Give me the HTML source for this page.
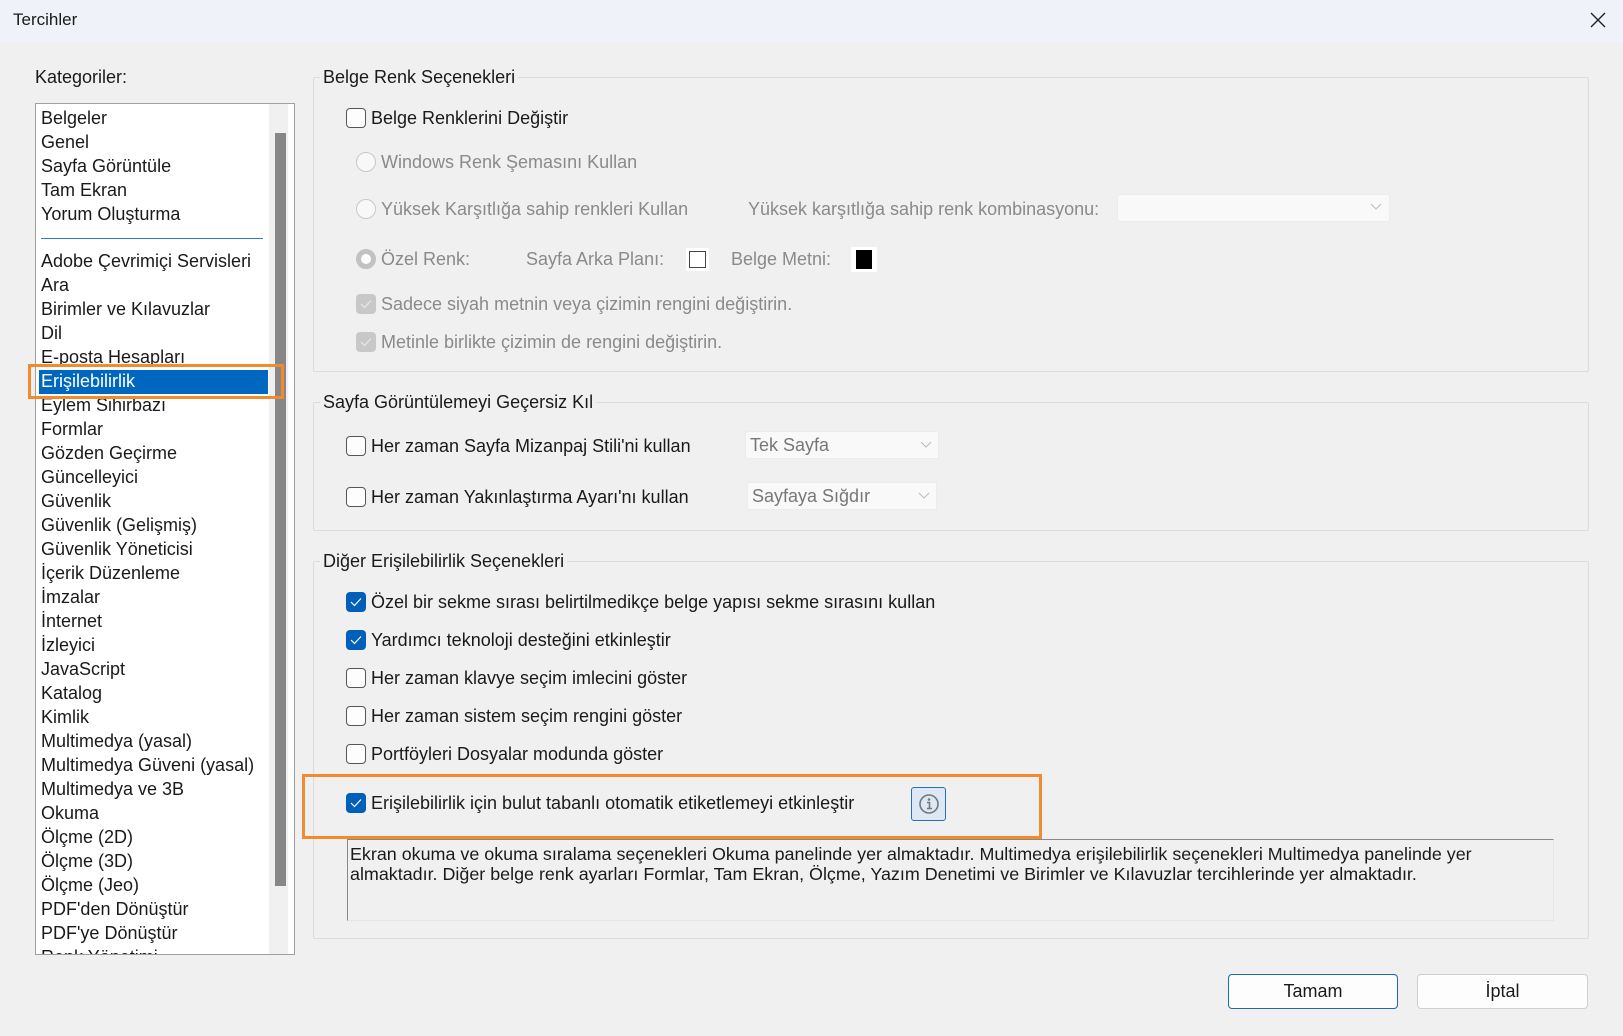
<!DOCTYPE html>
<html><head><meta charset="utf-8"><style>
*{box-sizing:border-box;margin:0;padding:0}
body{width:1623px;height:1036px;background:#f0f0f0;font-family:"Liberation Sans",Arial,sans-serif;font-size:18px;color:#1a1a1a;position:relative;overflow:hidden}
.a{position:absolute;white-space:nowrap;line-height:20px}
.title{position:absolute;left:0;top:0;width:1623px;height:42px;background:#eff3f9}
.list{position:absolute;left:35px;top:103px;width:260px;height:852px;background:#fff;border:1px solid #a0a0a0;overflow:hidden}
.li{position:absolute;left:5px;line-height:20px;white-space:nowrap}
.grp{position:absolute;border:1px solid #dcdcdc;border-radius:2px}
.gt{position:absolute;background:#f0f0f0;line-height:20px}
.cb{position:absolute;width:20px;height:20px;border:1px solid #555;border-radius:4px;background:#fdfdfd}
.cbc{position:absolute;width:20px;height:20px;border-radius:4px;background:#005fb8}
.cbd{position:absolute;width:20px;height:20px;border-radius:4px;background:#c8c8c8}
.rad{position:absolute;width:20px;height:20px;border:1px solid #c8c8c8;border-radius:50%;background:#f8f8f8}
.dis{color:#8a8a8a}
.dd{position:absolute;background:#f9f9f9;border:1px solid #ececec}
.btn{position:absolute;height:35px;border:1px solid #cfcfcf;border-radius:4px;background:#fdfdfd;text-align:center;line-height:33px}
</style></head><body>
<div class="title"></div>
<div class="a" style="left:13px;top:10px;font-size:17px">Tercihler</div>
<svg class="a" style="left:1590px;top:12px" width="16" height="16"><path d="M1 1L15 15M15 1L1 15" stroke="#222" stroke-width="1.4"/></svg>

<div class="a" style="left:35px;top:67px">Kategoriler:</div>
<div class="list">
<div style="position:absolute;left:233px;top:0;width:19px;height:852px;background:#f0f0f0"></div>
<div style="position:absolute;left:239px;top:29px;width:11px;height:753px;background:#878787"></div>
<div style="position:absolute;left:5px;top:134px;width:222px;height:1px;background:#2b7bd0"></div>
<div style="position:absolute;left:3px;top:266px;width:229px;height:24px;background:#0067c0"></div>
<div class="li" style="top:4px">Belgeler</div>
<div class="li" style="top:28px">Genel</div>
<div class="li" style="top:52px">Sayfa Görüntüle</div>
<div class="li" style="top:76px">Tam Ekran</div>
<div class="li" style="top:100px">Yorum Oluşturma</div>
<div class="li" style="top:147px">Adobe Çevrimiçi Servisleri</div>
<div class="li" style="top:171px">Ara</div>
<div class="li" style="top:195px">Birimler ve Kılavuzlar</div>
<div class="li" style="top:219px">Dil</div>
<div class="li" style="top:243px">E-posta Hesapları</div>
<div class="li" style="top:267px;color:#fff">Erişilebilirlik</div>
<div class="li" style="top:291px">Eylem Sihirbazı</div>
<div class="li" style="top:315px">Formlar</div>
<div class="li" style="top:339px">Gözden Geçirme</div>
<div class="li" style="top:363px">Güncelleyici</div>
<div class="li" style="top:387px">Güvenlik</div>
<div class="li" style="top:411px">Güvenlik (Gelişmiş)</div>
<div class="li" style="top:435px">Güvenlik Yöneticisi</div>
<div class="li" style="top:459px">İçerik Düzenleme</div>
<div class="li" style="top:483px">İmzalar</div>
<div class="li" style="top:507px">İnternet</div>
<div class="li" style="top:531px">İzleyici</div>
<div class="li" style="top:555px">JavaScript</div>
<div class="li" style="top:579px">Katalog</div>
<div class="li" style="top:603px">Kimlik</div>
<div class="li" style="top:627px">Multimedya (yasal)</div>
<div class="li" style="top:651px">Multimedya Güveni (yasal)</div>
<div class="li" style="top:675px">Multimedya ve 3B</div>
<div class="li" style="top:699px">Okuma</div>
<div class="li" style="top:723px">Ölçme (2D)</div>
<div class="li" style="top:747px">Ölçme (3D)</div>
<div class="li" style="top:771px">Ölçme (Jeo)</div>
<div class="li" style="top:795px">PDF'den Dönüştür</div>
<div class="li" style="top:819px">PDF'ye Dönüştür</div>
<div class="li" style="top:843px">Renk Yönetimi</div>
</div>
<div style="position:absolute;left:28px;top:364px;width:256px;height:35px;border:3px solid #f28a30"></div>

<!-- group 1 -->
<div class="grp" style="left:313px;top:77px;width:1276px;height:295px"></div>
<div class="gt" style="left:320px;top:67px;padding:0 3px">Belge Renk Seçenekleri</div>
<div class="cb" style="left:346px;top:108px"></div>
<div class="a" style="left:371px;top:108px">Belge Renklerini Değiştir</div>
<div class="rad" style="left:356px;top:152px"></div>
<div class="a dis" style="left:381px;top:152px">Windows Renk Şemasını Kullan</div>
<div class="rad" style="left:356px;top:199px"></div>
<div class="a dis" style="left:381px;top:199px">Yüksek Karşıtlığa sahip renkleri Kullan</div>
<div class="a dis" style="left:748px;top:199px">Yüksek karşıtlığa sahip renk kombinasyonu:</div>
<div class="dd" style="left:1117px;top:194px;width:273px;height:28px"></div>
<svg class="a" style="left:1370px;top:203px" width="12" height="8"><path d="M1 1L6 6L11 1" fill="none" stroke="#bbb"/></svg>
<div class="rad" style="left:356px;top:249px;background:#fff;border:5px solid #c2c2c2"></div>
<div class="a dis" style="left:381px;top:249px">Özel Renk:</div>
<div class="a dis" style="left:526px;top:249px">Sayfa Arka Planı:</div>
<div style="position:absolute;left:686px;top:248px;width:23px;height:23px;background:#fff;border:3px solid #fff"><div style="width:100%;height:100%;border:1.5px solid #444"></div></div>
<div class="a dis" style="left:731px;top:249px">Belge Metni:</div>
<div style="position:absolute;left:851px;top:247px;width:26px;height:25px;background:#fff;padding:3px 5px"><div style="width:100%;height:100%;background:#000"></div></div>
<div class="cbd" style="left:356px;top:294px"></div>
<svg class="a" style="left:360px;top:299px" width="12" height="10"><path d="M1 5L4.5 8.5L11 1.5" fill="none" stroke="#e8e8e8" stroke-width="1.2"/></svg>
<div class="a dis" style="left:381px;top:294px">Sadece siyah metnin veya çizimin rengini değiştirin.</div>
<div class="cbd" style="left:356px;top:332px"></div>
<svg class="a" style="left:360px;top:337px" width="12" height="10"><path d="M1 5L4.5 8.5L11 1.5" fill="none" stroke="#e8e8e8" stroke-width="1.2"/></svg>
<div class="a dis" style="left:381px;top:332px">Metinle birlikte çizimin de rengini değiştirin.</div>

<!-- group 2 -->
<div class="grp" style="left:313px;top:402px;width:1276px;height:129px"></div>
<div class="gt" style="left:320px;top:392px;padding:0 3px">Sayfa Görüntülemeyi Geçersiz Kıl</div>
<div class="cb" style="left:346px;top:436px"></div>
<div class="a" style="left:371px;top:436px">Her zaman Sayfa Mizanpaj Stili'ni kullan</div>
<div class="dd" style="left:745px;top:431px;width:194px;height:28px"></div>
<div class="a" style="left:750px;top:435px;color:#777">Tek Sayfa</div>
<svg class="a" style="left:920px;top:441px" width="12" height="8"><path d="M1 1L6 6L11 1" fill="none" stroke="#bbb"/></svg>
<div class="cb" style="left:346px;top:487px"></div>
<div class="a" style="left:371px;top:487px">Her zaman Yakınlaştırma Ayarı'nı kullan</div>
<div class="dd" style="left:747px;top:482px;width:190px;height:28px"></div>
<div class="a" style="left:752px;top:486px;color:#777">Sayfaya Sığdır</div>
<svg class="a" style="left:918px;top:492px" width="12" height="8"><path d="M1 1L6 6L11 1" fill="none" stroke="#bbb"/></svg>

<!-- group 3 -->
<div class="grp" style="left:313px;top:561px;width:1276px;height:378px"></div>
<div class="gt" style="left:320px;top:551px;padding:0 3px">Diğer Erişilebilirlik Seçenekleri</div>
<div class="cbc" style="left:346px;top:592px"></div>
<svg class="a" style="left:350px;top:597px" width="12" height="10"><path d="M1 5L4.5 8.5L11 1.5" fill="none" stroke="#fff" stroke-width="1.2"/></svg>
<div class="a" style="left:371px;top:592px">Özel bir sekme sırası belirtilmedikçe belge yapısı sekme sırasını kullan</div>
<div class="cbc" style="left:346px;top:630px"></div>
<svg class="a" style="left:350px;top:635px" width="12" height="10"><path d="M1 5L4.5 8.5L11 1.5" fill="none" stroke="#fff" stroke-width="1.2"/></svg>
<div class="a" style="left:371px;top:630px">Yardımcı teknoloji desteğini etkinleştir</div>
<div class="cb" style="left:346px;top:668px"></div>
<div class="a" style="left:371px;top:668px">Her zaman klavye seçim imlecini göster</div>
<div class="cb" style="left:346px;top:706px"></div>
<div class="a" style="left:371px;top:706px">Her zaman sistem seçim rengini göster</div>
<div class="cb" style="left:346px;top:744px"></div>
<div class="a" style="left:371px;top:744px">Portföyleri Dosyalar modunda göster</div>
<div style="position:absolute;left:302px;top:774px;width:740px;height:65px;border:3px solid #f28a30"></div>
<div class="cbc" style="left:346px;top:793px"></div>
<svg class="a" style="left:350px;top:798px" width="12" height="10"><path d="M1 5L4.5 8.5L11 1.5" fill="none" stroke="#fff" stroke-width="1.2"/></svg>
<div class="a" style="left:371px;top:793px">Erişilebilirlik için bulut tabanlı otomatik etiketlemeyi etkinleştir</div>
<div style="position:absolute;left:911px;top:787px;width:35px;height:34px;border:1px solid #2d6fb0;border-radius:3px;background:#dce8f5"></div>
<svg class="a" style="left:917px;top:792px" width="24" height="24"><circle cx="12" cy="12" r="9" fill="none" stroke="#777" stroke-width="1.6"/><circle cx="12" cy="7.5" r="1.3" fill="#777"/><path d="M10 10.5h2.5v6M10 16.5h5" fill="none" stroke="#777" stroke-width="1.6"/></svg>
<div style="position:absolute;left:347px;top:839px;width:1207px;height:82px;border-top:1px solid #888;border-left:1px solid #888;border-right:1px solid #e6e6e6;border-bottom:1px solid #e6e6e6"></div>
<div class="a" style="left:350px;top:844px;font-size:17.9px">Ekran okuma ve okuma sıralama seçenekleri Okuma panelinde yer almaktadır. Multimedya erişilebilirlik seçenekleri Multimedya panelinde yer</div>
<div class="a" style="left:350px;top:864px;font-size:17.9px">almaktadır. Diğer belge renk ayarları Formlar, Tam Ekran, Ölçme, Yazım Denetimi ve Birimler ve Kılavuzlar tercihlerinde yer almaktadır.</div>

<div class="btn" style="left:1228px;top:974px;width:170px;border-color:#1a6ab4">Tamam</div>
<div class="btn" style="left:1417px;top:974px;width:171px">İptal</div>
</body></html>
